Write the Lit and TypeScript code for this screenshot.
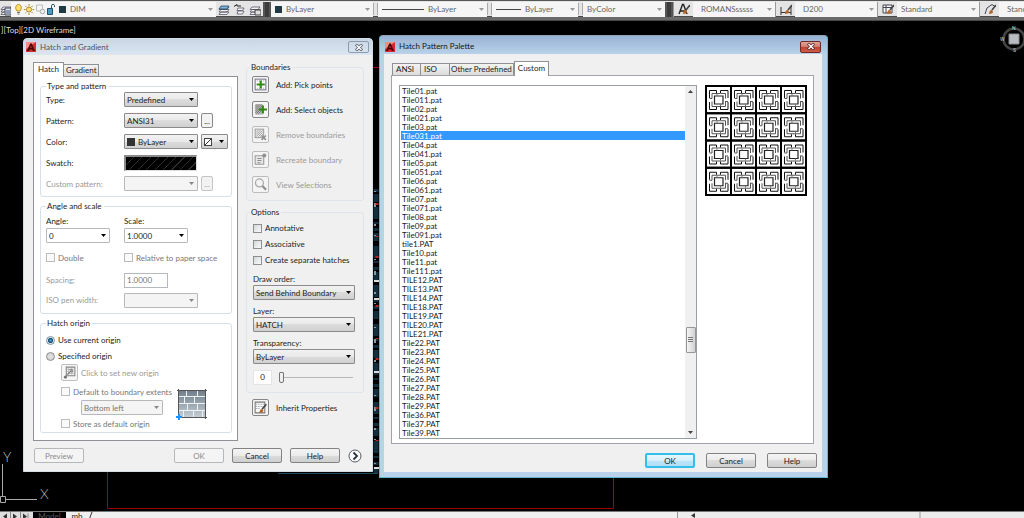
import { LitElement, html, svg, css, nothing } from "lit";
import { customElement } from "lit/decorators.js";

/* ---------- shared look of the dialogs ---------- */

const controls = css`
  * {
    box-sizing: border-box;
  }
  :host {
    --ui: Lato, "Liberation Sans", sans-serif;
    display: block;
    font: 8px/10px var(--ui);
    color: #1c1c1c;
  }
  svg {
    display: block;
  }
  label {
    white-space: nowrap;
  }
  button,
  input,
  select {
    font: inherit;
    color: inherit;
    margin: 0;
  }
  .titlebar {
    display: flex;
    align-items: center;
    gap: 4px;
    line-height: 16px;
  }
  .titlebar h2 {
    flex: 1;
    margin: 0;
    font: inherit;
  }
  .close {
    display: grid;
    place-items: center;
    width: 21px;
    height: 12px;
    padding: 0;
    border: 1px solid #8d9bb0;
    border-radius: 2px;
    background: transparent;
  }
  .tabs {
    display: flex;
    align-items: flex-end;
  }
  .tab {
    height: 12px;
    padding: 0 2px;
    border: 1px solid #8e9196;
    border-bottom: 0;
    border-left-width: 0;
    background: linear-gradient(#f3f3f3, #dcdcdc);
    text-align: left;
    line-height: 11px;
    white-space: nowrap;
  }
  .tab:first-child {
    border-left-width: 1px;
  }
  .tab.on {
    height: 15px;
    margin-bottom: -1px;
    padding: 0 4px 2px;
    border-left-width: 1px;
    background: #fff;
    line-height: 12px;
    z-index: 1;
  }
  .push {
    width: 50px;
    height: 15px;
    padding: 0;
    border: 1px solid #838383;
    border-radius: 2px;
    background: linear-gradient(#f4f4f4, #ebebeb 50%, #dcdcdc 50%, #cfcfcf);
    line-height: 12px;
    text-align: center;
  }
  .push:disabled {
    border-color: #b5b8ba;
    background: #f4f4f4;
    color: #8c8c8c;
  }
  .push.default {
    border: 2px solid #35bdec;
    background: linear-gradient(#e6f6fd, #d8effb 50%, #bce4f8 50%, #b3dff5);
    line-height: 10px;
  }
`;

const letterA = html`<svg width="10" height="10" viewBox="0 0 10 10" aria-hidden="true">
  <rect width="10" height="10" fill="#d9292b" />
  <path d="M0 0h10L0 7z" fill="#f08d87" />
  <path d="M1 9 4.2 1.4h1.6L9 9H6.700L6.200 7.400H3.600L3 9z" fill="#4c0608" />
  <path d="M4.300 5.700 5 3.600l.7 2.100z" fill="#e8514c" />
</svg>`;

const cross = (edge: string) => html`<svg width="8" height="7" viewBox="0 0 8 7" aria-hidden="true">
  <path d="M2 1.500l4 4M6 1.500l-4 4" stroke=${edge} stroke-width="3" stroke-linecap="square" />
  <path d="M2 1.500l4 4M6 1.500l-4 4" stroke="#fff" stroke-width="1.400" stroke-linecap="square" />
</svg>`;

/* ---------- Hatch and Gradient ---------- */

const grayHatch = svg`<rect x="2" y="2" width="8" height="8" fill="#e8e8e8" stroke="#777" stroke-width=".8"/>
  <path d="M3 5l2-2M3 7l4-4M3 9l6-6M5 9l4-4M7 9l2-2" stroke="#777" stroke-width=".7"/>`;
const plus = svg`<path d="M6.200 3.200h2v2.800H11v2H8.200v2.800h-2V8H3.400V6h2.800z" fill="#2f8a12"/>`;

const icons = {
  pick: svg`<rect x="2" y="2" width="10" height="10" fill="#fff" stroke="#778" stroke-width="1"/>
    <path d="M3.500 3.700h7M3.500 10.500h7" stroke="#889" stroke-dasharray="1 1" stroke-width=".8"/>${plus}`,
  select: svg`<path d="M2 2h7v10H2z" fill="#bbb"/>
    <path d="M2 4l2-2M2 6l4-4M2 8l6-6M2 10l7-7M3 11l6-6M5 11l4-4" stroke="#555" stroke-width=".6"/>
    <g transform="translate(2)">${plus}</g>`,
  remove: svg`${grayHatch}<path d="M8 8l4 4M12 8l-4 4" stroke="#777" stroke-width="1.400"/>`,
  recreate: svg`<path d="M2 3.500h8v8H2z" fill="#e8e8e8" stroke="#888"/>
    <path d="M4 6h4M4 8h4M4 10h3" stroke="#777"/><circle cx="10.500" cy="3.200" r="1.900" fill="#777"/>`,
  view: svg`<circle cx="6" cy="5.500" r="3.700" fill="#f6f6f6" stroke="#999" stroke-width="1.200"/>
    <path d="M8.800 8.500l3.400 3.500" stroke="#777" stroke-width="2"/>`,
  origin: svg`<path d="M4 2h8v8H4z" fill="#f2f2f2" stroke="#666"/>
    <path d="M5 4h6M5 6h6M5 8h6M6 3v6M9 3v6" stroke="#999" stroke-width=".7"/>
    <path d="M5 9l3.500-3.500M7 4.500h2.500V7" stroke="#555" fill="none"/><circle cx="3.200" cy="11.300" r="1.600" fill="#555"/>`,
  inherit: svg`<path d="M2 2h9v10H2z" fill="#fafafa" stroke="#777"/>
    <path d="M3 4h7M3 6h7M3 8h4" stroke="#8a97a0" stroke-dasharray="1 1"/>
    <path d="M8.500 8.500L12.500 4" stroke="#444" stroke-width="1.500"/><path d="M6 12c0-2 1-3.500 2.500-3.500S10 11 8.500 11.800z" fill="#b5662a"/>`,
};

@customElement("hatch-dialog")
export class HatchDialog extends LitElement {
  static styles = [
    controls,
    css`
      :host {
        display: flex;
        flex-direction: column;
        border: 1px solid #d3dde8;
        border-radius: 4px 4px 0 0;
        background: #f0f0f0;
        overflow: hidden;
      }
      .titlebar {
        padding: 0 3px 0 2px;
        background: linear-gradient(#c9d6e3, #dbe6f2);
        color: #4b5561;
      }
      .body {
        display: flex;
        gap: 8px;
        padding: 7px 8px 0 9px;
      }
      .left {
        flex: 1;
        min-width: 0;
      }
      .left .tabs {
        height: 14px;
      }
      .left .tab {
        padding-right: 1px;
      }
      .left .tab.on {
        width: 31px;
      }
      .panel {
        display: flex;
        flex-direction: column;
        gap: 4px;
        padding: 4px 5px 7px 6px;
        border: 1px solid #8e9196;
        background: #fff;
      }
      .right {
        display: flex;
        flex: none;
        flex-direction: column;
        gap: 6px;
        width: 118px;
      }
      fieldset {
        margin: 0;
        min-width: 0;
        border: 1px solid #d6e0e8;
        border-radius: 3px;
        padding: 0 5px;
      }
      legend {
        height: 10px;
        margin: 0;
        padding: 0 2px 0 1px;
      }
      .right fieldset {
        border-color: #dfe5ea;
      }
      .right legend {
        margin-left: -2px;
      }
      .grid {
        display: grid;
        grid-template-columns: 78px 1fr;
        align-items: center;
      }
      .type {
        grid-auto-rows: 21px;
        margin-top: -2px;
        padding-bottom: 2px;
      }
      .angle {
        grid-template-rows: 12px 17px 27px 18px 22px;
        padding: 4px 0 2px;
      }
      .row {
        display: flex;
        align-items: center;
        gap: 3px;
      }
      .dim {
        color: #9a9a9a;
      }
      .mid {
        color: #777;
      }
      select {
        appearance: none;
        height: 15px;
        padding: 0 12px 0 2px;
        border: 1px solid #8a8a8a;
        border-radius: 1px;
        background: url("data:image/svg+xml,%3Csvg xmlns='http://www.w3.org/2000/svg' width='5' height='3'%3E%3Cpath d='M0 0h5L2.500 3z' fill='%23000'/%3E%3C/svg%3E")
            right 3px center no-repeat,
          linear-gradient(#f2f2f2, #e9e9e9 50%, #dcdcdc 50%, #d0d0d0);
        line-height: 12px;
        width: 74px;
      }
      select:disabled {
        opacity: 1;
        border-color: #b8b8b8;
        color: #777;
        background: url("data:image/svg+xml,%3Csvg xmlns='http://www.w3.org/2000/svg' width='5' height='3'%3E%3Cpath d='M0 0h5L2.500 3z' fill='%23888'/%3E%3C/svg%3E")
            right 3px center no-repeat,
          #f4f4f4;
      }
      select.edit {
        width: 64px;
        border-color: #b5b9be;
        background-image: url("data:image/svg+xml,%3Csvg xmlns='http://www.w3.org/2000/svg' width='5' height='3'%3E%3Cpath d='M0 0h5L2.500 3z' fill='%23000'/%3E%3C/svg%3E");
        background-color: #fff;
      }
      select.wide {
        width: 102px;
      }
      .swatched {
        display: grid;
        align-items: center;
      }
      .swatched > * {
        grid-area: 1 / 1;
      }
      .swatched select {
        padding-left: 13px;
      }
      .chip {
        width: 8px;
        height: 8px;
        margin-left: 3px;
        background: #333;
        z-index: 1;
        pointer-events: none;
      }
      .chip.none {
        background: linear-gradient(to top left, #fff 44%, #333 44%, #333 56%, #fff 56%);
        border: 1px solid #444;
      }
      select.mini {
        width: 26px;
      }
      .dots {
        width: 12px;
        height: 15px;
        padding: 0;
        border: 1px solid #8a8a8a;
        border-radius: 2px;
        background: #f2f2f2;
        line-height: 12px;
        text-align: center;
      }
      .dots:disabled {
        border-color: #c4c4c4;
        color: #999;
      }
      .swatch {
        width: 73px;
        height: 16px;
        padding: 0;
        border: 2px solid #8a8a8a;
        border-right: 1px solid #ddd;
        border-bottom: 1px solid #ddd;
        background: repeating-linear-gradient(135deg, #000 0 5px, #2c2c2c 5px 6px);
      }
      input[type="checkbox"] {
        appearance: none;
        flex: none;
        width: 9px;
        height: 9px;
        border: 1px solid #8e8f8f;
        background: linear-gradient(135deg, #d4d7da, #fafafa);
      }
      input[type="checkbox"]:disabled {
        border-color: #bcbcbc;
        background: #fafafa;
      }
      input[type="radio"] {
        appearance: none;
        flex: none;
        width: 9px;
        height: 9px;
        border: 1px solid #8e8f8f;
        border-radius: 50%;
        background: radial-gradient(#e6e6e6, #c8c8c8);
      }
      input[type="radio"]:checked {
        border-color: #7f929f;
        background: radial-gradient(circle closest-side, #3aa0cc 20%, #123f66 60%, #dce9f0 85%);
      }
      input[type="text"] {
        width: 44px;
        height: 15px;
        padding: 0 2px;
        border: 1px solid #b5b9be;
        background: #fff;
      }
      input.level {
        width: 19px;
        border-color: #e2e5e8;
        text-align: center;
      }
      .origin {
        display: grid;
        grid-template-columns: 1fr auto;
        align-items: center;
        padding: 4px 18px 1px 0;
      }
      .origin .full {
        grid-column: 1 / -1;
        height: 16px;
      }
      .origin .pick {
        height: 20px;
        padding-left: 15px;
      }
      .sub {
        display: flex;
        flex-direction: column;
        padding-left: 15px;
        gap: 1px;
      }
      .sub .row {
        height: 15px;
      }
      .sub select {
        width: 82px;
        margin-left: 20px;
      }
      .tool {
        display: grid;
        place-items: center;
        width: 17px;
        height: 17px;
        padding: 0;
        border: 1px solid #858585;
        border-radius: 2px;
        background: #f5f5f5;
      }
      .tool:disabled {
        border-color: #b0b0b0;
        opacity: 0.8;
      }
      .bounds {
        padding-bottom: 3px;
      }
      .bounds .row {
        height: 25px;
      }
      .bounds .row,
      .inherit .row {
        gap: 7px;
      }
      .options {
        display: flex;
        flex-direction: column;
        padding: 3px 0 7px 1px;
      }
      .options > .row {
        height: 16px;
      }
      .options > label {
        height: 11px;
        margin-top: 6px;
      }
      .options .slide {
        margin-top: 5px;
        gap: 7px;
      }
      input[type="range"] {
        appearance: none;
        width: 74px;
        height: 12px;
        background: linear-gradient(#b3b7ba, #b3b7ba) center / 100% 1px no-repeat;
      }
      input[type="range"]::-webkit-slider-thumb {
        appearance: none;
        width: 5px;
        height: 11px;
        border: 1px solid #777;
        border-radius: 1px 1px 2px 2px;
        background: #eee;
      }
      .inherit {
        padding-left: 6px;
      }
      .foot {
        display: flex;
        align-items: center;
        gap: 8px;
        padding: 7px 10px 0 10px;
      }
      .foot .gap {
        flex: 1;
      }
      .more {
        width: 14px;
        height: 14px;
        padding: 0;
        border: 0;
        background: none;
      }
    `,
  ];

  private tool(id: string, icon: unknown, text: string, off = false) {
    return html`<div class="row">
      <button class="tool" id=${id} ?disabled=${off} aria-label=${text}>
        <svg width="15" height="15" viewBox="0 0 14 14" fill="none">${icon}</svg>
      </button>
      <label class=${off ? "dim" : ""} for=${id}>${text}</label>
    </div>`;
  }

  private check(id: string, text: string, off = false) {
    return html`<div class="row ${off ? "mid" : ""}">
      <input type="checkbox" id=${id} ?disabled=${off} /><label for=${id}>${text}</label>
    </div>`;
  }

  render() {
    return html`
      <header class="titlebar">
        ${letterA}
        <h2>Hatch and Gradient</h2>
        <button class="close" aria-label="Close">${cross("#59626e")}</button>
      </header>
      <div class="body">
        <div class="left">
          <div class="tabs" role="tablist">
            <button class="tab on" role="tab" aria-selected="true">Hatch</button>
            <button class="tab" role="tab">Gradient</button>
          </div>
          <div class="panel" role="tabpanel">
            <fieldset>
              <legend>Type and pattern</legend>
              <div class="grid type">
                <label for="type">Type:</label>
                <select id="type"><option>Predefined</option></select>
                <label for="pattern">Pattern:</label>
                <div class="row">
                  <select id="pattern"><option>ANSI31</option></select>
                  <button class="dots" aria-label="Browse patterns">...</button>
                </div>
                <label for="color">Color:</label>
                <div class="row">
                  <div class="swatched"><span class="chip"></span><select id="color"><option>ByLayer</option></select></div>
                  <div class="swatched">
                    <span class="chip none"></span><select class="mini" aria-label="Background color"><option></option></select>
                  </div>
                </div>
                <label for="swatch">Swatch:</label>
                <button class="swatch" id="swatch" aria-label="Swatch"></button>
                <label class="dim" for="custom">Custom pattern:</label>
                <div class="row">
                  <select id="custom" disabled><option></option></select>
                  <button class="dots" disabled aria-label="Browse custom patterns">...</button>
                </div>
              </div>
            </fieldset>
            <fieldset>
              <legend>Angle and scale</legend>
              <div class="grid angle">
                <label for="angle">Angle:</label>
                <label for="scale">Scale:</label>
                <select class="edit" id="angle"><option>0</option></select>
                <select class="edit" id="scale"><option>1.0000</option></select>
                ${this.check("double", "Double", true)} ${this.check("paper", "Relative to paper space", true)}
                <label class="dim" for="spacing">Spacing:</label>
                <input class="mid" type="text" id="spacing" value="1.0000" disabled />
                <label class="dim" for="iso">ISO pen width:</label>
                <select id="iso" disabled><option></option></select>
              </div>
            </fieldset>
            <fieldset>
              <legend>Hatch origin</legend>
              <div class="origin">
                <div class="row full">
                  <input type="radio" name="origin" id="current" checked /><label for="current">Use current origin</label>
                </div>
                <div class="row full">
                  <input type="radio" name="origin" id="specified" /><label for="specified">Specified origin</label>
                </div>
                <div class="full pick">${this.tool("new-origin", icons.origin, "Click to set new origin", true)}</div>
                <div class="sub">
                  ${this.check("extents", "Default to boundary extents", true)}
                  <select aria-label="Boundary corner" disabled><option>Bottom left</option></select>
                  ${this.check("store", "Store as default origin", true)}
                </div>
                <svg width="32" height="40" viewBox="0 0 32 40" fill="none" aria-hidden="true">
                  <defs>
                    <linearGradient id="brick" x2="0" y2="1">
                      <stop stop-color="#71808c" />
                      <stop offset="1" stop-color="#c3cdd4" />
                    </linearGradient>
                  </defs>
                  <path d="M3 3h26v26H3z" fill="url(#brick)" />
                  <path
                    d="M3 8.500h26M3 15.500h26M3 22.500h26M10.500 3v5.500M21.500 3v5.500M8.500 8.500v7M18.500 8.500v7M11.500 15.500v7M21.500 15.500v7M7.500 22.500v7M17.500 22.500v7M26.500 22.500v7"
                    stroke="#eef2f5"
                  />
                  <path d="M2.500 1v28M29.500 1v30M1 2.500h30M3 29.500h28" stroke="#555" />
                  <path d="M0 29h6M3 26v6" stroke="#1e90ff" stroke-width="2" />
                </svg>
              </div>
            </fieldset>
          </div>
        </div>
        <div class="right">
          <fieldset class="bounds">
            <legend>Boundaries</legend>
            ${this.tool("pick", icons.pick, "Add: Pick points")} ${this.tool("select", icons.select, "Add: Select objects")}
            ${this.tool("remove", icons.remove, "Remove boundaries", true)}
            ${this.tool("recreate", icons.recreate, "Recreate boundary", true)}
            ${this.tool("view", icons.view, "View Selections", true)}
          </fieldset>
          <fieldset>
            <legend>Options</legend>
            <div class="options">
              ${this.check("annotative", "Annotative")} ${this.check("associative", "Associative")}
              ${this.check("separate", "Create separate hatches")}
              <label for="order">Draw order:</label>
              <select class="wide" id="order"><option>Send Behind Boundary</option></select>
              <label for="layer">Layer:</label>
              <select class="wide" id="layer"><option>HATCH</option></select>
              <label for="transparency">Transparency:</label>
              <select class="wide" id="transparency"><option>ByLayer</option></select>
              <div class="row slide">
                <input class="level" type="text" aria-label="Transparency value" value="0" />
                <input type="range" aria-label="Transparency level" min="0" max="90" value="0" />
              </div>
            </div>
          </fieldset>
          <div class="inherit">${this.tool("inherit", icons.inherit, "Inherit Properties")}</div>
        </div>
      </div>
      <footer class="foot">
        <button class="push" disabled>Preview</button>
        <span class="gap"></span>
        <button class="push" disabled>OK</button>
        <button class="push">Cancel</button>
        <button class="push">Help</button>
        <button class="more" aria-label="More options">
          <svg width="14" height="14" viewBox="0 0 14 14" fill="none">
            <circle cx="7" cy="7" r="6" fill="#fafafa" stroke="#555d66" />
            <path d="M5.500 3.500L9 7l-3.500 3.500" stroke="#2a3340" stroke-width="1.800" />
          </svg>
        </button>
      </footer>
    `;
  }
}

/* ---------- Hatch Pattern Palette ---------- */

const files = [
  ..."01 011 02 021 03 031 04 041 05 051 06 061 07 071 08 09 091".split(" ").map((n) => `Tile${n}.pat`),
  "tile1.PAT",
  ..."10 11 111".split(" ").map((n) => `Tile${n}.pat`),
  ..."12 13 14 18 19 20 21".split(" ").map((n) => `TILE${n}.PAT`),
  ..."22 23 24 25 26 27 28 29 36 37 39 40".split(" ").map((n) => `Tile${n}.PAT`),
];

@customElement("palette-dialog")
export class PaletteDialog extends LitElement {
  static styles = [
    controls,
    css`
      :host {
        display: flex;
        flex-direction: column;
        padding: 0 5px 5px 4px;
        border: 1px solid #62b9d3;
        border-top-color: #8fa3b8;
        border-radius: 4px 4px 0 0;
        background: linear-gradient(#98b3d2, #b9d1ea 18px);
      }
      .titlebar {
        height: 18px;
        padding: 3px 1px 0 1px;
        line-height: 15px;
        color: #101820;
      }
      .close {
        border-color: #6b2a26;
        background: linear-gradient(#e2a497, #d0796b 50%, #c0432f 50%, #cf5c44);
      }
      .inner {
        display: flex;
        flex-direction: column;
        flex: 1;
        padding: 8px 5px 4px 7px;
        background: #f0f0f0;
      }
      .tabs {
        height: 13px;
        padding-left: 1px;
      }
      .short {
        width: 29px;
        padding: 0 3px;
      }
      .inner .tab:not(.short, .on) {
        padding: 0 1px;
      }
      .inner .on {
        padding: 0 3px 2px;
      }
      .panel {
        display: flex;
        gap: 8px;
        flex: 1;
        align-items: flex-start;
        margin-right: 3px;
        padding: 9px 6px 4px 7px;
        border: 1px solid #a0a4aa;
        background: #fff;
      }
      .list {
        display: flex;
        flex: 1;
        height: 354px;
        border: 1px solid #989da4;
      }
      .files {
        flex: 1;
        height: 100%;
        padding: 0;
        border: 0;
        outline: 0;
        background: #fff;
        scrollbar-width: none;
        overflow: hidden;
        border-radius: 0;
      }
      .files option {
        display: block;
        height: 9px;
        min-height: 9px;
        margin: 0 0 0 1px;
        padding: 0 0 0 1px;
        line-height: 9px;
      }
      .files option:checked {
        background: linear-gradient(#3399ff, #3399ff);
        color: #fff;
      }
      .bar {
        display: flex;
        flex-direction: column;
        align-items: center;
        width: 11px;
        padding: 4px 0;
        background: #f0f0f0;
      }
      .before {
        flex: 234;
      }
      .after {
        flex: 78;
      }
      .thumb {
        display: grid;
        place-items: center;
        width: 10px;
        height: 26px;
        border: 1px solid #979797;
        border-radius: 1px;
        background: linear-gradient(90deg, #f4f4f4, #d2d2d2);
      }
      .foot {
        display: flex;
        justify-content: flex-end;
        gap: 11px;
        padding-top: 9px;
      }
    `,
  ];

  /** One cell of the tile motif: broken square rings around a small square. */
  private cell(col: number, row: number) {
    return svg`<g transform="translate(${1 + col * 25} ${1 + row * 27.25})" fill="none">
      <path d="M0 0h25v27.250H0z" stroke="#000" stroke-width="2"/>
      <path d="M3.500 12V4.500H10.500V7M14.500 7V4.500h7.500V12M22 16v7.500h-7.500V21M10.500 21v2.500H3.500V16" stroke="#111" stroke-width="1"/>
      <path d="M3.500 12.500H6V7.500h8.500M19.500 15.500H22M19.500 12.500V7.500h-5M6 15.500v5h5M11 20.500h8.500V15" stroke="#555" stroke-width="1"/>
      <path d="M8.500 18V10h8.500v8z" stroke="#222" stroke-width="1.200"/>
      <path d="M11 8v2M14.500 18v2" stroke="#777" stroke-width="1"/>
    </g>`;
  }

  render() {
    return html`
      <header class="titlebar">
        ${letterA}
        <h2>Hatch Pattern Palette</h2>
        <button class="close" aria-label="Close">${cross("#5c2b2b")}</button>
      </header>
      <div class="inner">
        <div class="tabs" role="tablist">
          <button class="tab short" role="tab">ANSI</button>
          <button class="tab short" role="tab">ISO</button>
          <button class="tab" role="tab">Other Predefined</button>
          <button class="tab on" role="tab" aria-selected="true">Custom</button>
        </div>
        <div class="panel" role="tabpanel">
          <div class="list">
            <select class="files" size="40" aria-label="Custom patterns">
              ${files.map((f) => html`<option ?selected=${f === "Tile031.pat"}>${f}</option>`)}
            </select>
            <div class="bar" aria-hidden="true">
              <svg width="5" height="3"><path d="M0 3h5L2.500 0z" fill="#444" /></svg>
              <span class="before"></span>
              <span class="thumb">
                <svg width="5" height="6"><path d="M0 .5h5M0 2.500h5M0 4.500h5" stroke="#777" /></svg>
              </span>
              <span class="after"></span>
              <svg width="5" height="3"><path d="M0 0h5L2.500 3z" fill="#444" /></svg>
            </div>
          </div>
          <svg width="102" height="111" viewBox="0 0 102 111" role="img" aria-label="Tile031 preview">
            ${[0, 1, 2, 3].map((r) => [0, 1, 2, 3].map((c) => this.cell(c, r)))}
          </svg>
        </div>
        <footer class="foot">
          <button class="push default">OK</button>
          <button class="push">Cancel</button>
          <button class="push">Help</button>
        </footer>
      </div>
    `;
  }
}

/* ---------- drawing window ---------- */

const brush = svg`<path d="M8 7l4-5" stroke="#444" stroke-width="1.600"/><path d="M5 11c0-2 1-4 2.500-4S9.500 9.500 8 10.600z" fill="#b5662a"/>`;
const sheets = svg`<path d="M3 4h8L9 6.500H1zM3 6.500h8L9 9H1zM3 9h8l-2 2.500H1z" fill="#f4f4f4" stroke="#556" stroke-width=".8"/>`;
const glyphs = {
  manager: svg`${sheets}<path d="M5 5h6v7H5z" fill="#d5e3ef" stroke="#445"/><path d="M6 8h4M6 10h4" stroke="#457"/>`,
  current: svg`${sheets}<path d="M3 3h8L9 6H1z" fill="#7fb2d8" stroke="#246" stroke-width=".8"/>`,
  previous: svg`<path d="M1 3.500l3-2v1.500h4" stroke="#222"/><path d="M5 5h6L9.500 7.500H4zM5 8h6l-1.500 3H4z" fill="#f4f4f4" stroke="#556" stroke-width=".8"/>`,
  states: svg`${sheets}<path d="M6 7h6v5H6z" fill="#ddd" stroke="#444"/>`,
  text: svg`<path d="M1 11L4.500 1.500h1L9 11M2.500 8h5" stroke="#222" stroke-width="1.400"/>${brush}`,
  dim: svg`<path d="M1 4v8M11 4v8M1 9.500h10" stroke="#333"/>${brush}`,
  table: svg`<path d="M1 2h9v8H1zM1 4.500h9M4 2v8" fill="#f8f8f8" stroke="#445"/>${brush}`,
  leader: svg`<path d="M1 11l2-6 5-3.500 3 2" stroke="#445"/>${brush}`,
};

@customElement("app-root")
export class AppRoot extends LitElement {
  static styles = css`
    * {
      box-sizing: border-box;
    }
    :host {
      display: flex;
      flex-direction: column;
      height: 100vh;
      overflow: hidden;
      background: #000;
      font: 8px/14px Lato, "Liberation Sans", sans-serif;
      color: #666;
    }
    svg {
      display: block;
      flex: none;
      fill: none;
    }
    .toolbar {
      display: flex;
      align-items: center;
      height: 21px;
      padding: 0 0 3px;
      border-top: 1px solid #555;
      border-bottom: 1px solid #484848;
      background: linear-gradient(#e4e4e4 0 15px, #4a4a4a 15px 16px, #6b6b6b 16px);
      overflow: hidden;
    }
    .icons {
      display: flex;
      align-items: center;
      justify-content: space-around;
      flex: none;
      height: 15px;
    }
    .props {
      width: 11px;
    }
    .layers {
      width: 47px;
    }
    .style {
      width: 20px;
      border-left: 1px solid #999;
    }
    .field {
      display: flex;
      align-items: center;
      flex: none;
      gap: 4px;
      width: 82px;
      height: 15px;
      padding-left: 4px;
      background: #f5f5f5;
    }
    .layer {
      width: 205px;
    }
    .color {
      width: 102px;
    }
    .line {
      width: 109px;
    }
    .weight {
      width: 86px;
    }
    select {
      appearance: none;
      flex: 1;
      min-width: 0;
      height: 14px;
      margin: 0;
      padding: 0 12px 0 0;
      border: 0;
      font: inherit;
      color: #666;
      opacity: 1;
      background: url("data:image/svg+xml,%3Csvg xmlns='http://www.w3.org/2000/svg' width='5' height='3'%3E%3Cpath d='M0 0h5L2.500 3z' fill='%23999'/%3E%3C/svg%3E")
        right 3px center no-repeat;
    }
    .inset {
      padding-left: 4px;
    }
    .chip {
      width: 7px;
      height: 7px;
      background: #1d3a45;
    }
    .rule {
      width: 42px;
      height: 1px;
      background: #444;
    }
    .rule.small {
      width: 25px;
    }
    .grip {
      flex: none;
      width: 8px;
      height: 15px;
      border: solid #555;
      border-width: 0 2px;
      background: #3c3c3c;
    }
    .sep {
      flex: none;
      width: 5px;
      height: 12px;
      border: solid #aaa;
      border-width: 0 1px;
    }
    .canvas {
      position: relative;
      flex: 1;
      overflow: hidden;
    }
    .drawing {
      position: absolute;
      inset: 0;
    }
    .view {
      margin: 0;
      padding: 3px 0 0 1px;
      font: inherit;
      line-height: 12px;
      color: #ddd;
    }
    .compass {
      position: absolute;
      top: 2px;
      right: -4px;
    }
    .compass text {
      fill: #ccc;
      font: 5px Roboto, sans-serif;
    }
    .drawing text {
      fill: #bbb;
      font: 300 14px Lato, sans-serif;
    }
    hatch-dialog {
      position: absolute;
      left: 23px;
      top: 17px;
      width: 350px;
      height: 434px;
    }
    palette-dialog {
      position: absolute;
      left: 379px;
      top: 14px;
      width: 449px;
      height: 443px;
    }
    .layouts {
      display: flex;
      height: 7px;
      border-top: 1px solid #777;
      background: #f0f0f0;
      overflow: hidden;
    }
    .nav {
      flex: none;
      background: #ddd;
    }
    .sheet {
      flex: none;
      width: 33px;
      height: 8px;
      padding: 0;
      border: 0;
      background: #000;
      font: 8px/8px Lato, sans-serif;
      color: #555;
    }
    .sheet.mb {
      width: 22px;
      background: #f0f0f0;
      color: #222;
    }
    .slash {
      flex: none;
    }
    .scroll {
      flex: 1;
      margin-left: 583px;
      padding-left: 5px;
      border-left: 1px solid #999;
      background: #ececec;
    }
    .scroll svg {
      width: 100%;
    }
  `;

  private field(kind: string, label: string, value: string, lead: unknown = nothing, inset = false) {
    return html`<div class="field ${kind}">
      ${lead}<select class=${inset ? "inset" : ""} aria-label=${label}><option>${value}</option></select>
    </div>`;
  }

  private glyph(g: unknown) {
    return html`<svg width="12" height="13" viewBox="0 0 12 13" aria-hidden="true">${g}</svg>`;
  }

  render() {
    const layerState = html`<svg width="40" height="13" viewBox="0 0 40 13" aria-hidden="true">
      <path d="M2 8C-.5 5 1 1.500 3.500 1.500S7.500 5 5 8z" fill="#ffe06a" stroke="#b48a28" />
      <path d="M2 9.500h3M2.500 11h2" stroke="#777" />
      <circle cx="14" cy="6.500" r="2.500" fill="#ffe06a" stroke="#a9842c" />
      <path d="M14 1v1.800M14 10.200V12M8.800 6.500h1.700M17.500 6.500h1.700M10.300 2.800l1.200 1.200M17.700 2.800l-1.200 1.200M10.300 10.200l1.200-1.200M17.700 10.200l-1.200-1.200" stroke="#a9842c" />
      <path d="M21.500 2h6v6h-6z" stroke="#bbb" />
      <circle cx="27.500" cy="8.500" r="2.300" fill="#eee" stroke="#aaa" />
      <path d="M32.500 5.500h5v6h-5z" fill="#4b9ac4" stroke="#234f68" />
      <path d="M36.500 5V2.500c0-1.500 3-1.500 3 0V4" stroke="#234f68" />
    </svg>`;
    return html`
      <nav class="toolbar" aria-label="Properties">
        <div class="icons props">${this.glyph(glyphs.manager)}</div>
        ${this.field("layer", "Layer", "DIM", html`${layerState}<span class="chip"></span>`)}
        <div class="icons layers">${this.glyph(glyphs.current)}${this.glyph(glyphs.previous)}${this.glyph(glyphs.states)}</div>
        <span class="grip"></span>
        ${this.field("color", "Color", "ByLayer", html`<span class="chip"></span>`)}
        <span class="sep"></span>
        ${this.field("line", "Linetype", "ByLayer", html`<span class="rule"></span>`)}
        <span class="sep"></span>
        ${this.field("weight", "Lineweight", "ByLayer", html`<span class="rule small"></span>`)}
        <span class="sep"></span>
        ${this.field("", "Plot style", "ByColor")}
        <span class="grip"></span>
        <div class="icons style">${this.glyph(glyphs.text)}</div>
        ${this.field("", "Text style", "ROMANSsssss", nothing, true)}
        <div class="icons style">${this.glyph(glyphs.dim)}</div>
        ${this.field("", "Dimension style", "D200", nothing, true)}
        <div class="icons style">${this.glyph(glyphs.table)}</div>
        ${this.field("", "Table style", "Standard")}
        <div class="icons style">${this.glyph(glyphs.leader)}</div>
        ${this.field("", "Multileader style", "Standard", nothing, true)}
      </nav>
      <main class="canvas">
        <svg class="drawing" width="100%" height="100%" aria-hidden="true">
          <path d="M107.500 440v47.500h506V440M370 46.500h12" stroke="#a00404" />
          <path d="M278 452.500h100" stroke="#1c4a58" />
          <path d="M376 168v284" stroke="#12303b" stroke-width="5" stroke-dasharray="3 2 8 5 12 3 2 4" />
          <path d="M375 170v280" stroke="#8c9aa0" stroke-width="2" stroke-dasharray="1 11 4 17 2 9 1 23" />
          <path d="M377 182v250" stroke="#b02a22" stroke-width="3" stroke-dasharray="2 31 1 19 2 47" />
          <path d="M374 260h5M374 278h5M374 351h5M374 447h5" stroke="#ddd" stroke-width="2" />
          <path d="M2.500 443v32M6 478.500h31M.5 475.500h5v6h-5z" stroke="#aaa" />
          <text x="3" y="441">Y</text>
          <text x="40" y="478">X</text>
        </svg>
        <h1 class="view">][Top][2D Wireframe]</h1>
        <svg class="compass" width="28" height="32" viewBox="0 0 28 32" aria-hidden="true">
          <circle cx="14" cy="16" r="10.500" stroke="#444" stroke-width="2.500" />
          <path d="M9 11h10v10H9z" fill="#b9bcc0" stroke="#8a8d90" />
          <text x="12" y="7">N</text>
          <text x="0" y="18">W</text>
          <text x="13" y="29">S</text>
        </svg>
        <hatch-dialog></hatch-dialog>
        <palette-dialog></palette-dialog>
      </main>
      <footer class="layouts">
        <svg class="nav" width="33" height="8" viewBox="0 0 33 8" aria-hidden="true">
          <path d="M7 1.500v6L3 4.500zM13 1.500v6l4-3zM23 1.500v6l4-3z" fill="#333" />
          <path d="M10.500 0v8M20.500 0v8M28 1.500v6" stroke="#888" />
        </svg>
        <button class="sheet">Model</button>
        <button class="sheet mb">mb</button>
        <svg class="slash" width="6" height="8" aria-hidden="true"><path d="M1 8L4 0" stroke="#333" /></svg>
        <div class="scroll">
          <svg height="7" aria-hidden="true">
            <path d="M12 1v5L8 3.500z" fill="#333" />
            <path d="M237 0v7" stroke="#999" />
          </svg>
        </div>
      </footer>
    `;
  }
}
